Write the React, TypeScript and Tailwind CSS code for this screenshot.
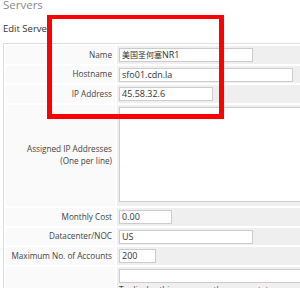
import React from "react";

const Input = ({ w, children }: { w: string; children?: React.ReactNode }) => (
  <div
    className={`${w} h-[14px] box-border border border-[#cccccc] bg-white pl-[2px] flex items-center text-[9px] leading-[12px] text-[#333] whitespace-nowrap overflow-hidden`}
  >
    {children}
  </div>
);

const Label = ({ children }: { children: React.ReactNode }) => (
  <div className="bg-[#fafafa] flex items-center justify-end pr-[3px] text-right text-[8.2px] leading-[12px] text-[#444] whitespace-nowrap">
    <div>{children}</div>
  </div>
);

const Field = ({ children }: { children: React.ReactNode }) => (
  <div className="bg-[#efefef] pl-[2px] pt-[2px]">{children}</div>
);

export default function App() {
  return (
    <div className="relative w-[300px] h-[288px] overflow-hidden bg-white font-['Open_Sans','Noto_Sans_CJK_SC',sans-serif]">
      <div className="-mt-[1px] h-[12px] pl-[3px] text-[11.5px] leading-[12px] text-[#8a8a8a]">Servers</div>
      <div className="mt-[12px] h-[12px] pl-[3px] text-[9.5px] leading-[12px] text-[#333]">Edit Server</div>
      <div className="ml-[3px] mt-[8px] w-[340px] border border-[#dddddd] bg-white p-[2px]">
        <div className="grid grid-cols-[109px_1fr] gap-[2px] grid-rows-[17.5px_17.5px_17.5px_101.5px_17.5px_17.5px_17.5px_70px]">
          <Label>Name</Label>
          <Field>
            <Input w="w-[134px]">
              <span className="text-[8px]">美国圣何塞</span>NR1
            </Input>
          </Field>
          <Label>Hostname</Label>
          <Field>
            <Input w="w-[174px]">sfo01.cdn.la</Input>
          </Field>
          <Label>IP Address</Label>
          <Field>
            <Input w="w-[94px]">45.58.32.6</Input>
          </Field>
          <Label>
            Assigned IP Addresses
            <br />
            (One per line)
          </Label>
          <Field>
            <div className="w-[220px] h-[95.5px] box-border border border-[#cccccc] bg-white" />
          </Field>
          <Label>Monthly Cost</Label>
          <Field>
            <Input w="w-[53px]">0.00</Input>
          </Field>
          <Label>Datacenter/NOC</Label>
          <Field>
            <Input w="w-[134px]">US</Input>
          </Field>
          <Label>Maximum No. of Accounts</Label>
          <Field>
            <Input w="w-[37px]">200</Input>
          </Field>
          <Label>Server Status Address</Label>
          <Field>
            <Input w="w-[220px]" />
            <div className="mt-[1px] text-[8.2px] leading-[12px] text-[#444] whitespace-nowrap">
              To display this server on the server status page, enter the full path
            </div>
          </Field>
        </div>
      </div>
      <div className="absolute left-[47px] top-[15px] w-[177px] h-[104px] border-l-[5px] border-r-[5px] border-t-[4px] border-b-[5px] border-[#ff0000]" />
    </div>
  );
}
